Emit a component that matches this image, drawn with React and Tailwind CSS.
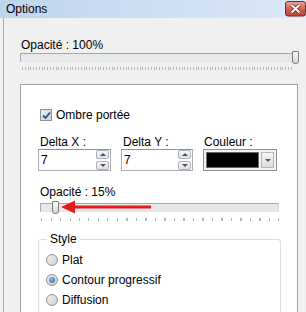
import React from 'react'

const font = { fontFamily: '"Liberation Sans", Arial, sans-serif' }

const Spinner = () => (
    <div className="flex flex-col gap-[2px] mr-[1px]">
        <div className="w-[13px] h-[9px] border border-[#aeb3ba] rounded-[2px] bg-gradient-to-b from-[#f6f7f8] to-[#dcdfe3] flex items-center justify-center">
            <div className="w-0 h-0 border-l-[3px] border-r-[3px] border-b-[3px] border-l-transparent border-r-transparent border-b-[#4d5157]" />
        </div>
        <div className="w-[13px] h-[9px] border border-[#aeb3ba] rounded-[2px] bg-gradient-to-b from-[#f6f7f8] to-[#dcdfe3] flex items-center justify-center">
            <div className="w-0 h-0 border-l-[3px] border-r-[3px] border-t-[3px] border-l-transparent border-r-transparent border-t-[#4d5157]" />
        </div>
    </div>
)

const NumberField = ({ label, value, width }) => (
    <div className="flex flex-col" style={{ width }}>
        <span className="leading-[14px] pl-[2px]">{label}</span>
        <div className="h-[22px] border border-[#abadb3] border-t-[#8e9196] bg-white flex items-center justify-between pl-[2px]">
            <span>{value}</span>
            <Spinner />
        </div>
    </div>
)

const Radio = ({ label, checked }) => (
    <div className="h-[20px] flex items-center gap-[4px]">
        <div className="w-[12px] h-[12px] rounded-full border border-[#8f8f8f] bg-gradient-to-br from-[#f2f2f2] to-[#cfcfcf] flex items-center justify-center">
            {checked && <div className="w-[6px] h-[6px] rounded-full bg-[radial-gradient(circle_at_40%_35%,#7fc6ef,#1d5f9a)]" />}
        </div>
        <span>{label}</span>
    </div>
)

const Track = ({ thumb }) => (
    <div className="relative h-[9px] border border-[#a7a7a7] border-b-[#e3e3e3] border-r-[#d8d8d8] bg-[#e7e8e9]">
        <div
            className="absolute top-[-3px] w-[7px] h-[13px] border border-[#7b7b7b] bg-gradient-to-b from-[#fbfbfb] to-[#d6d6d6] rounded-t-[1px] rounded-b-[3px]"
            style={{ left: thumb }}
        />
    </div>
)

const CloseButton = () => (
    <svg width="21" height="16" viewBox="0 0 21 16" className="mt-[1px] shrink-0">
        <defs>
            <linearGradient id="closeFill" x1="0" y1="0" x2="0" y2="1">
                <stop offset="0" stopColor="#e9aa9f" />
                <stop offset="0.45" stopColor="#d36656" />
                <stop offset="1" stopColor="#b9423a" />
            </linearGradient>
        </defs>
        <rect x="0.5" y="0.5" width="20" height="14.5" rx="2.5" fill="url(#closeFill)" stroke="#6e2a28" />
        <path d="M6.5 4 L14.5 11.5 M14.5 4 L6.5 11.5" stroke="#5a2020" strokeWidth="3.4" />
        <path d="M6.5 4 L14.5 11.5 M14.5 4 L6.5 11.5" stroke="#ffffff" strokeWidth="1.9" />
    </svg>
)

export default function App() {
    return (
        <div className="w-[306px] h-[312px] overflow-hidden bg-[#f0f0f0] text-[12px] text-black" style={font}>
            {/* title bar */}
            <div className="h-[18px] flex items-start bg-[linear-gradient(90deg,#bfd4ee,#d2e2f4_70%,#dce9f7)]">
                <span className="flex-1 pl-[6px] pt-[1px] text-[12px] leading-[16px]">Options</span>
                <CloseButton />
            </div>

            <div className="ml-[3px] border-l border-[#a9a9a9] h-[294px] pl-[16px] pr-[8px]">
                <div className="pt-[17px] h-[35px] flex items-end">
                    <span className="leading-[16px] pl-[1px]">Opacité : 100%</span>
                </div>
                <div className="w-[277px]">
                    <Track thumb="271px" />
                </div>
                <div className="mt-[5px] w-[272px] ml-[2px] h-[3px] bg-[repeating-linear-gradient(90deg,#b4b4b4_0_1px,transparent_1px_2.8px)]" />

                {/* panel */}
                <div className="mt-[14px] w-[278px] h-[240px] border border-[#a0a0a0] bg-white pl-[17px] pt-[22px]">
                    <div className="flex items-center gap-[4px] pl-[2px] h-[16px]">
                        <div className="w-[12px] h-[12px] border border-[#8e8f8f] bg-gradient-to-br from-[#e4ecf6] to-[#c9d6e6] flex items-center justify-center">
                            <svg width="9" height="9" viewBox="0 0 9 9">
                                <path d="M1 4.5 L3.5 7 L8 1.5" fill="none" stroke="#2c4f8c" strokeWidth="1.8" />
                            </svg>
                        </div>
                        <span>Ombre portée</span>
                    </div>

                    <div className="mt-[12px] flex gap-[10px]">
                        <NumberField label="Delta X :" value="7" width="73px" />
                        <NumberField label="Delta Y :" value="7" width="72px" />
                        <div className="flex flex-col w-[74px]">
                            <span className="leading-[14px] pl-[1px]">Couleur :</span>
                            <div className="h-[22px] border border-[#8f8f8f] bg-[#f3f3f3] flex items-center gap-[2px] px-[2px]">
                                <div className="flex-1 h-[16px] bg-black border border-[#6a6a6a]" />
                                <div className="w-[13px] h-[16px] border border-[#b4b8bd] bg-gradient-to-b from-[#f4f5f6] to-[#d9dcdf] flex items-center justify-center">
                                    <div className="w-0 h-0 border-l-[3px] border-r-[3px] border-t-[3px] border-l-transparent border-r-transparent border-t-[#5a5e63]" />
                                </div>
                            </div>
                        </div>
                    </div>

                    <div className="mt-[13px] leading-[16px] pl-[2px]">Opacité : 15%</div>
                    <div className="relative mt-[3px] w-[239px] ml-[2px]">
                        <Track thumb="11px" />
                        <svg className="absolute left-[21px] top-[-4px]" width="92" height="16" viewBox="0 0 92 16">
                            <path d="M12 8 H90" stroke="#e51b1b" strokeWidth="3" />
                            <path d="M0 8 L14 1.5 L14 14.5 Z" fill="#e51b1b" />
                        </svg>
                    </div>
                    <div className="mt-[6px] w-[238px] ml-[3px] h-[3px] bg-[repeating-linear-gradient(90deg,#b4b4b4_0_1px,transparent_1px_9.5px)]" />

                    {/* Style group */}
                    <div className="relative mt-[18px] w-[243px] h-[100px] border border-[#d5dfe5] rounded-[3px] pl-[7px] pt-[10px]">
                        <span className="absolute left-[8px] top-[-9px] bg-white px-[3px] leading-[16px]">Style</span>
                        <Radio label="Plat" />
                        <Radio label="Contour progressif" checked />
                        <Radio label="Diffusion" />
                    </div>
                </div>
            </div>
        </div>
    )
}
